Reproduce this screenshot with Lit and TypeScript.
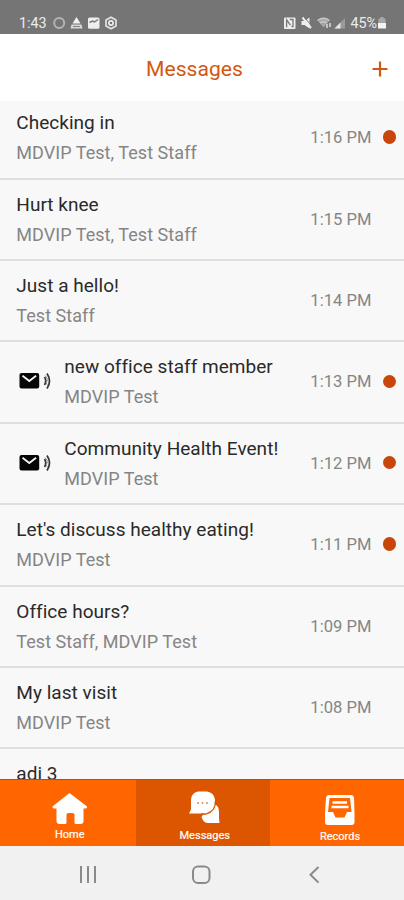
import { LitElement, html, css, svg } from "lit";
import { customElement, property } from "lit/decorators.js";

interface Message {
  title: string;
  from: string;
  time: string;
  unread?: boolean;
  broadcast?: boolean;
}

const MESSAGES: Message[] = [
  { title: "Checking in", from: "MDVIP Test, Test Staff", time: "1:16 PM", unread: true },
  { title: "Hurt knee", from: "MDVIP Test, Test Staff", time: "1:15 PM" },
  { title: "Just a hello!", from: "Test Staff", time: "1:14 PM" },
  { title: "new office staff member", from: "MDVIP Test", time: "1:13 PM", unread: true, broadcast: true },
  { title: "Community Health Event!", from: "MDVIP Test", time: "1:12 PM", unread: true, broadcast: true },
  { title: "Let's discuss healthy eating!", from: "MDVIP Test", time: "1:11 PM", unread: true },
  { title: "Office hours?", from: "Test Staff, MDVIP Test", time: "1:09 PM" },
  { title: "My last visit", from: "MDVIP Test", time: "1:08 PM" },
  { title: "adi 3", from: "", time: "" },
];

@customElement("status-bar")
class StatusBar extends LitElement {
  static styles = css`
    :host {
      display: flex;
      justify-content: space-between;
      align-items: flex-start;
      height: 33.5px;
      padding: 14px 17px 0 19px;
      background: #757575;
      color: #ececec;
      font: 14.3px/18px Roboto, sans-serif;
      box-sizing: border-box;
    }
    .group { display: flex; align-items: center; height: 18px; }
    .clock { width: 34px; }
    svg { display: block; }
  `;
  render() {
    return html`
      <div class="group">
        <span class="clock">1:43</span>
        <svg width="66" height="18" viewBox="0 0 66 18" fill="none">
          <circle cx="6.2" cy="9" r="5" stroke="#b4b4b4" stroke-width="2" />
          <path d="M23.5 3l4 6.500h-8z" fill="#f2f2f2" />
          <path d="M18.500 10.500h10l1 4h-12z" fill="#d8d8d8" />
          <path d="M20 12.500h7" stroke="#858585" />
          <rect x="35" y="3.500" width="11.500" height="11.300" rx="1.500" fill="#eee" />
          <path d="M36.500 8.500l3-1.500 2 1 3.500-2.500" stroke="#777" stroke-width="1.500" />
          <path d="M58 3.200l5 2.900v5.800l-5 2.900-5-2.900V6.100z" stroke="#e2e2e2" stroke-width="1.700" />
          <circle cx="58" cy="9" r="2.100" stroke="#eee" stroke-width="1.700" />
        </svg>
      </div>
      <div class="group">
        <svg width="66" height="18" viewBox="0 0 66 18" fill="none">
          <rect x="0" y="3.500" width="11.500" height="11.500" rx="1" fill="#eee" />
          <path d="M2.600 13.200V5.800l3.800 5.400M5.800 5.500H9v7H7.500" stroke="#777" stroke-width="1.300" />
          <path d="M17.500 7h3l5-3.500v11L20.500 11h-3z" fill="#eee" />
          <path d="M18.500 3.500l8.500 10.500" stroke="#eee" stroke-width="2" />
          <path d="M20.500 3.500l7.500 8.500" stroke="#757575" stroke-width="1" />
          <path d="M33.500 6.500q6-4.500 12 0L39.500 13.500z" fill="#a6a6a6" />
          <path d="M33.500 6.500q6-4.500 12 0M36 9q3.500-2.500 7 0" stroke="#c8c8c8" stroke-width="1.300" />
          <path d="M43 10v4M46 9v4" stroke="#ddd" stroke-width="1.500" />
          <path d="M61 4v10.500H50.500z" fill="#9a9a9a" />
          <path d="M56.500 8.500v6h-6z" fill="#e6e6e6" />
        </svg>
        <span>45%</span>
        <svg width="10" height="18" viewBox="0 0 10 18">
          <path d="M3.500 3h3v1.500h2v5H1.500v-5h2z" fill="#a8a8a8" />
          <path d="M1 9h8v5.500H1z" fill="#f4f4f4" />
        </svg>
      </div>
    `;
  }
}

@customElement("message-row")
class MessageRow extends LitElement {
  @property({ attribute: false }) message!: Message;
  static styles = css`
    :host {
      display: flex;
      flex: none;
      height: 81.4px;
      box-sizing: border-box;
      border-bottom: 2px solid #dfdfdf;
      padding: 0 8.5px 0 16.3px;
      font-family: Roboto, sans-serif;
      white-space: nowrap;
    }
    .lead { width: 48px; padding: 29.8px 0 0 3px; box-sizing: border-box; }
    .lead svg { display: block; }
    .body { flex: 1; min-width: 0; padding-top: 12px; }
    .title { font-size: 19px; line-height: 26px; letter-spacing: 0.03px; color: #2a2a2a; }
    .from { font-size: 18px; line-height: 24px; margin-top: 5px; letter-spacing: 0.05px; color: #858585; }
    .time { font-size: 16.6px; line-height: 24px; padding-top: 28px; width: 72.2px; color: #858585; }
    .dot { width: 13.5px; height: 13.5px; border-radius: 50%; background: #c8460a; margin-top: 32.2px; }
    .spot { width: 13px; }
  `;
  render() {
    const m = this.message;
    return html`
      ${m.broadcast
        ? html`<div class="lead">
            <svg width="34" height="18" viewBox="0 0 34 18" fill="none">
              <rect x="0.500" y="1" width="19.700" height="15.500" rx="2" fill="#050505" />
              <path d="M3.500 3.800l6.800 5.200 6.800-5.200" stroke="#f4f4f4" stroke-width="1.900" />
              <path d="M25.500 5q2.500 4 0 8M28 1.500q5 7.500 0 15" stroke="#333" stroke-width="1.700" />
              <path d="M26 3.500l3 4-2 3 2 3.500" stroke="#777" stroke-width="0.800" />
            </svg>
          </div>`
        : null}
      <div class="body">
        <div class="title">${m.title}</div>
        <div class="from">${m.from}</div>
      </div>
      <div class="time">${m.time}</div>
      <div class="spot">${m.unread ? html`<div class="dot"></div>` : null}</div>
    `;
  }
}

const homeIcon = svg`<path d="M17.500 1L35 14.500q.5 2-1.500 2h-2V29q0 3-3 3H24q-1.500 0-1.500-1.500V23q0-2-2-2h-4q-2 0-2 2v7.500Q14.500 32 13 32H7.500q-3 0-3-3V16.500H2q-2 0-1.500-2z" fill="#fff" />`;
const messagesIcon = svg`
  <path d="M22 12q8 1 8 8.500v6.500l.5 5H19q-4.500 0-6.500-6z" fill="#fff" />
  <path d="M9 0.500h9q7 1 8 8 0 12-10 14H0l2-4V9Q2.500 1.500 9 .5z" fill="#fff" />
  <path d="M26.800 9q0 11-9.500 14h-5" fill="none" stroke="#dc5500" stroke-width="1.300" />
  <g fill="#e08a55"><circle cx="9" cy="12" r="1" /><circle cx="13.500" cy="12" r="1" /><circle cx="18" cy="12" r="1" /></g>`;
const recordsIcon = svg`
  <path d="M4 1h22q2.500 0 3 3L29.500 19v9q0 3-3 3H3q-3 0-3-3v-9L1 4Q1.500 1 4 1z" fill="#fff" />
  <path d="M4.500 4h20.500l1.500 14H22l-2.500 5.500h-9L8 18H3z" fill="#f60" />
  <path d="M7.500 8.500h14.500M6.500 13h17" stroke="#fff" stroke-width="2.600" />`;

@customElement("app-root")
class AppRoot extends LitElement {
  static styles = css`
    :host {
      display: flex;
      flex-direction: column;
      height: 900px;
      overflow: hidden;
      background: #f8f8f8;
      font-family: Roboto, sans-serif;
    }
    status-bar { flex: none; }
    .header {
      flex: none;
      display: grid;
      grid-template-columns: 32px 1fr 48px;
      align-items: center;
      height: 67px;
      background: #fff;
      color: #d4570f;
    }
    .heading { grid-column: 2; text-align: center; font-size: 21.1px; padding: 2px 0 0 1px; }
    .add { display: block; margin: 4px 0 0 15.5px; }
    .list { flex: 1; min-height: 0; overflow: hidden; }
    message-row:first-child { margin-top: -2.3px; }
    .tabs {
      flex: none;
      display: grid;
      grid-template-columns: 135.5px 134.5px 134px;
      height: 67px;
      background: #f60;
      border-top: 1.5px solid #c44a00;
      box-sizing: border-box;
    }
    .tab { display: flex; flex-direction: column; align-items: center; gap: 3px; color: #fff; font-size: 11px; line-height: 14px; -webkit-text-stroke: 0.2px #fff; }
    .tab.active { background: #dc5500; }
    .tab svg { display: block; overflow: visible; }
    .home { padding: 12px 0 0 4px; }
    .msgs { padding: 10.5px 0 0 4px; }
    .recs { padding: 14px 0 0 6px; }
    .nav { flex: none; height: 54px; background: #f1f1f1; }
    .nav svg { display: block; }
  `;
  render() {
    return html`
      <status-bar></status-bar>
      <div class="header">
        <div class="heading">Messages</div>
        <svg class="add" width="16" height="16" viewBox="0 0 16 16" stroke="#d4570f" stroke-width="2.200"><path d="M8 .5v15M.5 8h15" /></svg>
      </div>
      <div class="list">${MESSAGES.map((m) => html`<message-row .message=${m}></message-row>`)}</div>
      <div class="tabs">
        <div class="tab home"><svg width="35" height="33">${homeIcon}</svg>Home</div>
        <div class="tab active msgs"><svg width="31" height="35">${messagesIcon}</svg>Messages</div>
        <div class="tab recs"><svg width="30" height="33">${recordsIcon}</svg>Records</div>
      </div>
      <div class="nav">
        <svg width="404" height="54" viewBox="0 0 404 54" fill="none" stroke="#8a8a8a" stroke-width="2">
          <path d="M81 20v17M88 20v17M95 20v17" />
          <rect x="193" y="20.500" width="16.500" height="16.500" rx="5" />
          <path d="M318.500 21l-8 7.800 8 7.800" />
        </svg>
      </div>
    `;
  }
}
